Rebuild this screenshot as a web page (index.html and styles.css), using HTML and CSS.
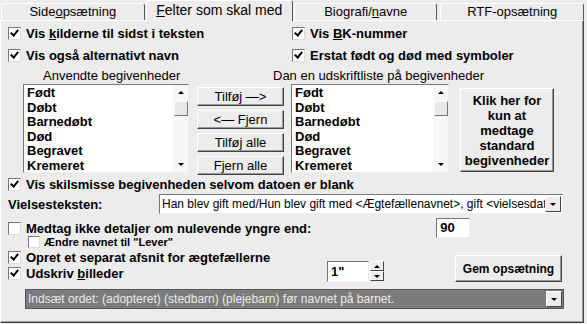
FILE: index.html
```html
<!DOCTYPE html>
<html lang="da">
<head>
    <meta charset="UTF-8">
    <title>Felter som skal med</title>
    <link rel="stylesheet" href="styles.css">
</head>
<body>
    <div class="tabs">
        <div class="tab">Side<u>o</u>psætning</div>
        <div class="tab active"><u>F</u>elter som skal med</div>
        <div class="tab">Biografi/<u>n</u>avne</div>
        <div class="tab">RTF-opsætning</div>
    </div>

    <div class="panel">
        <div class="row top-row">
            <label class="cb col-left"><span class="box on"></span><span>Vis <u>k</u>ilderne til sidst i teksten</span></label>
            <label class="cb"><span class="box on"></span><span>Vis <u>B</u>K-nummer</span></label>
        </div>
        <div class="row top-row second">
            <label class="cb col-left"><span class="box on"></span><span>Vis også alternativt navn</span></label>
            <label class="cb"><span class="box on"></span><span>Erstat født og død med symboler</span></label>
        </div>

        <div class="captions">
            <span class="cap-left">Anvendte begivenheder</span>
            <span class="cap-right">Dan en udskriftliste på begivenheder</span>
        </div>

        <div class="events">
            <div class="listbox list-left">
                <div class="items">
                    <div>Født</div><div>Døbt</div><div>Barnedøbt</div><div>Død</div><div>Begravet</div><div>Kremeret</div>
                </div>
                <div class="sb"><span class="arr up"></span><span class="thumb"></span><span class="fill"></span><span class="arr down"></span></div>
            </div>
            <div class="move-btns">
                <button class="btn">Tilføj —&gt;</button>
                <button class="btn">&lt;— Fjern</button>
                <button class="btn">Tilføj alle</button>
                <button class="btn">Fjern alle</button>
            </div>
            <div class="listbox list-right">
                <div class="items">
                    <div>Født</div><div>Døbt</div><div>Barnedøbt</div><div>Død</div><div>Begravet</div><div>Kremeret</div>
                </div>
                <div class="sb"><span class="arr up"></span><span class="thumb"></span><span class="fill"></span><span class="arr down"></span></div>
            </div>
            <button class="btn big-btn">Klik her for kun at medtage standard begivenheder</button>
        </div>

        <label class="cb divorce"><span class="box on"></span><span>Vis skilsmisse begivenheden selvom datoen er blank</span></label>

        <div class="row marriage">
            <span class="label">Vielsesteksten:</span>
            <div class="combo">
                <span class="combo-text">Han blev gift med/Hun blev gift med &lt;Ægtefællenavnet&gt;, gift &lt;vielsesdato</span>
                <span class="drop"><span class="arr down"></span></span>
            </div>
        </div>

        <div class="row living">
            <label class="cb"><span class="box"></span><span>Medtag ikke detaljer om nulevende yngre end:</span></label>
            <div class="edit age">90</div>
        </div>
        <label class="cb small"><span class="box"></span><span>Ændre navnet til "Lever"</span></label>

        <div class="row bottom">
            <div class="bottom-checks">
                <label class="cb"><span class="box on"></span><span>Opret et separat afsnit for ægtefællerne</span></label>
                <label class="cb"><span class="box on"></span><span>Udskriv <u>b</u>illeder</span></label>
            </div>
            <div class="spin">
                <div class="edit spin-edit">1"</div>
                <div class="spin-btns"><span class="sbtn"><span class="arr up"></span></span><span class="sbtn"><span class="arr down"></span></span></div>
            </div>
            <button class="btn save-btn">Gem opsætning</button>
        </div>

        <div class="combo dark">
            <span class="combo-text">Indsæt ordet: (adopteret) (stedbarn) (plejebarn) før navnet på barnet.</span>
            <span class="drop"><span class="arr down"></span></span>
        </div>
    </div>
</body>
</html>
```

FILE: styles.css
```css
body {
    margin: 0;
    width: 587px;
    height: 324px;
    background-color: #ececec;
    font-family: "Liberation Sans", Arial, sans-serif;
    color: #000;
    overflow: hidden;
}
u {
    text-decoration: underline;
    text-underline-offset: 1px;
}

/* tabs */
.tabs {
    display: flex;
    height: 20px;
    align-items: flex-end;
    padding-left: 1px;
}
.tab {
    width: 144px;
    height: 17px;
    box-sizing: border-box;
    border: 1px solid #fff;
    border-right-color: #555;
    border-bottom: none;
    border-radius: 3px 3px 0 0;
    text-align: center;
    font-size: 13px;
    line-height: 16px;
    margin-right: 3px;
}
.tab.active {
    width: 148px;
    height: 21px;
    margin: 0 1px -1px -2px;
    font-size: 14px;
    line-height: 19px;
    position: relative;
    z-index: 1;
    background-color: #ececec;
}

/* panel */
.panel {
    height: 303px;
    width: 584px;
    box-sizing: border-box;
    border: 1px solid #fff;
    border-right-color: #444;
    border-bottom-color: #444;
    box-shadow: inset -1px -1px 0 #999;
    padding: 4px 0 0 7px;
    font-size: 13px;
    font-weight: bold;
}
.row {
    display: flex;
    align-items: center;
}
.top-row {
    height: 16px;
}
.top-row.second {
    margin-top: 6px;
}
.col-left {
    width: 284px;
}

/* checkboxes */
.cb {
    display: flex;
    align-items: center;
    height: 16px;
    white-space: nowrap;
}
.box {
    width: 11px;
    height: 11px;
    background-color: #fff;
    border: 1px solid #777;
    border-right-color: #ddd;
    border-bottom-color: #ddd;
    margin-right: 5px;
    position: relative;
    flex-shrink: 0;
}
.box.on::after {
    content: "";
    position: absolute;
    left: 3px;
    top: 0px;
    width: 3px;
    height: 6px;
    border-right: 2px solid #000;
    border-bottom: 2px solid #000;
    transform: rotate(40deg);
}

/* captions over lists */
.captions {
    display: flex;
    margin-top: 6px;
    height: 14px;
    font-weight: normal;
    font-size: 13px;
    line-height: 14px;
}
.cap-left {
    margin-left: 35px;
    width: 230px;
}

/* event lists */
.events {
    display: flex;
    align-items: flex-start;
    margin-top: 1px;
    margin-left: 15px;
}
.listbox {
    display: flex;
    height: 89px;
    box-sizing: border-box;
    background-color: #fff;
    border: 1px solid #777;
    border-right-color: #eee;
    border-bottom-color: #eee;
}
.list-left {
    width: 166px;
}
.list-right {
    width: 158px;
    margin-left: 7px;
}
.items {
    flex: 1;
    padding: 1px 0 0 3px;
    line-height: 14.6px;
}
.sb {
    width: 15px;
    display: flex;
    flex-direction: column;
    align-items: center;
    background-color: #f7f7f7;
}
.arr {
    width: 0;
    height: 0;
    border-left: 3px solid transparent;
    border-right: 3px solid transparent;
}
.arr.up {
    border-bottom: 3px solid #000;
}
.arr.down {
    border-top: 3px solid #000;
}
.sb .arr.up {
    margin-top: 6px;
}
.sb .thumb {
    width: 12px;
    height: 13px;
    margin-top: 7px;
    background-color: #e8e8e8;
    border: 1px solid #fff;
    border-right-color: #777;
    border-bottom-color: #777;
}
.sb .fill {
    flex: 1;
}
.sb .arr.down {
    margin-bottom: 6px;
}

/* buttons */
.btn {
    font-family: inherit;
    font-size: 13px;
    background-color: #ececec;
    color: #000;
    border: 1px solid #fff;
    border-right-color: #444;
    border-bottom-color: #444;
    box-shadow: inset -1px -1px 0 #999;
    padding: 0;
}
.move-btns {
    display: flex;
    flex-direction: column;
    gap: 4px;
    margin: 3px 0 0 8px;
}
.move-btns .btn {
    width: 87px;
    height: 19px;
    line-height: 16px;
}
.big-btn {
    width: 94px;
    height: 84px;
    margin: 4px 0 0 11px;
    font-weight: bold;
    line-height: 15px;
    padding: 0 2px;
}

.divorce {
    margin-top: 1px;
}

/* marriage text */
.marriage {
    height: 20px;
    margin-top: 2px;
}
.label {
    width: 151px;
}
.combo {
    display: flex;
    width: 404px;
    height: 20px;
    box-sizing: border-box;
    background-color: #fff;
    border: 1px solid #777;
    border-right-color: #eee;
    border-bottom-color: #eee;
    font-weight: normal;
    font-size: 12px;
    align-items: center;
}
.combo-text {
    flex: 1;
    overflow: hidden;
    white-space: nowrap;
    padding-left: 2px;
}
.drop {
    width: 16px;
    height: 16px;
    box-sizing: border-box;
    margin-right: 1px;
    display: flex;
    align-items: center;
    justify-content: center;
    background-color: #ececec;
    border: 1px solid #fff;
    border-right-color: #444;
    border-bottom-color: #444;
}

/* living persons */
.living {
    margin-top: 4px;
    height: 20px;
}
.edit {
    background-color: #fff;
    border: 1px solid #777;
    border-right-color: #eee;
    border-bottom-color: #eee;
    box-sizing: border-box;
    padding-left: 3px;
    line-height: 17px;
}
.age {
    width: 34px;
    height: 20px;
    margin-left: 125px;
}
.small {
    font-size: 11px;
    margin-left: 20px;
    margin-top: -3px;
    height: 14px;
}
.small .box {
    width: 10px;
    height: 10px;
    margin-right: 4px;
}

/* bottom block */
.bottom {
    align-items: flex-end;
    height: 34px;
}
.bottom-checks {
    display: flex;
    flex-direction: column;
    align-self: flex-start;
    width: 319px;
}
.spin {
    display: flex;
    margin-bottom: 1px;
}
.spin-edit {
    width: 42px;
    height: 21px;
    font-size: 13px;
    line-height: 19px;
}
.spin-btns {
    display: flex;
    flex-direction: column;
    margin-left: 1px;
}
.sbtn {
    width: 14px;
    height: 10px;
    box-sizing: border-box;
    display: flex;
    align-items: center;
    justify-content: center;
    background-color: #ececec;
    border: 1px solid #fff;
    border-right-color: #444;
    border-bottom-color: #444;
}
.save-btn {
    width: 107px;
    height: 27px;
    margin-left: 71px;
    margin-bottom: 1px;
    font-weight: bold;
    font-size: 12px;
}
.combo.dark {
    margin: 6px 0 0 17px;
    width: 539px;
    background-color: #7b7b7b;
    color: #eaeaea;
    border-color: #555;
    font-size: 12px;
}
```
